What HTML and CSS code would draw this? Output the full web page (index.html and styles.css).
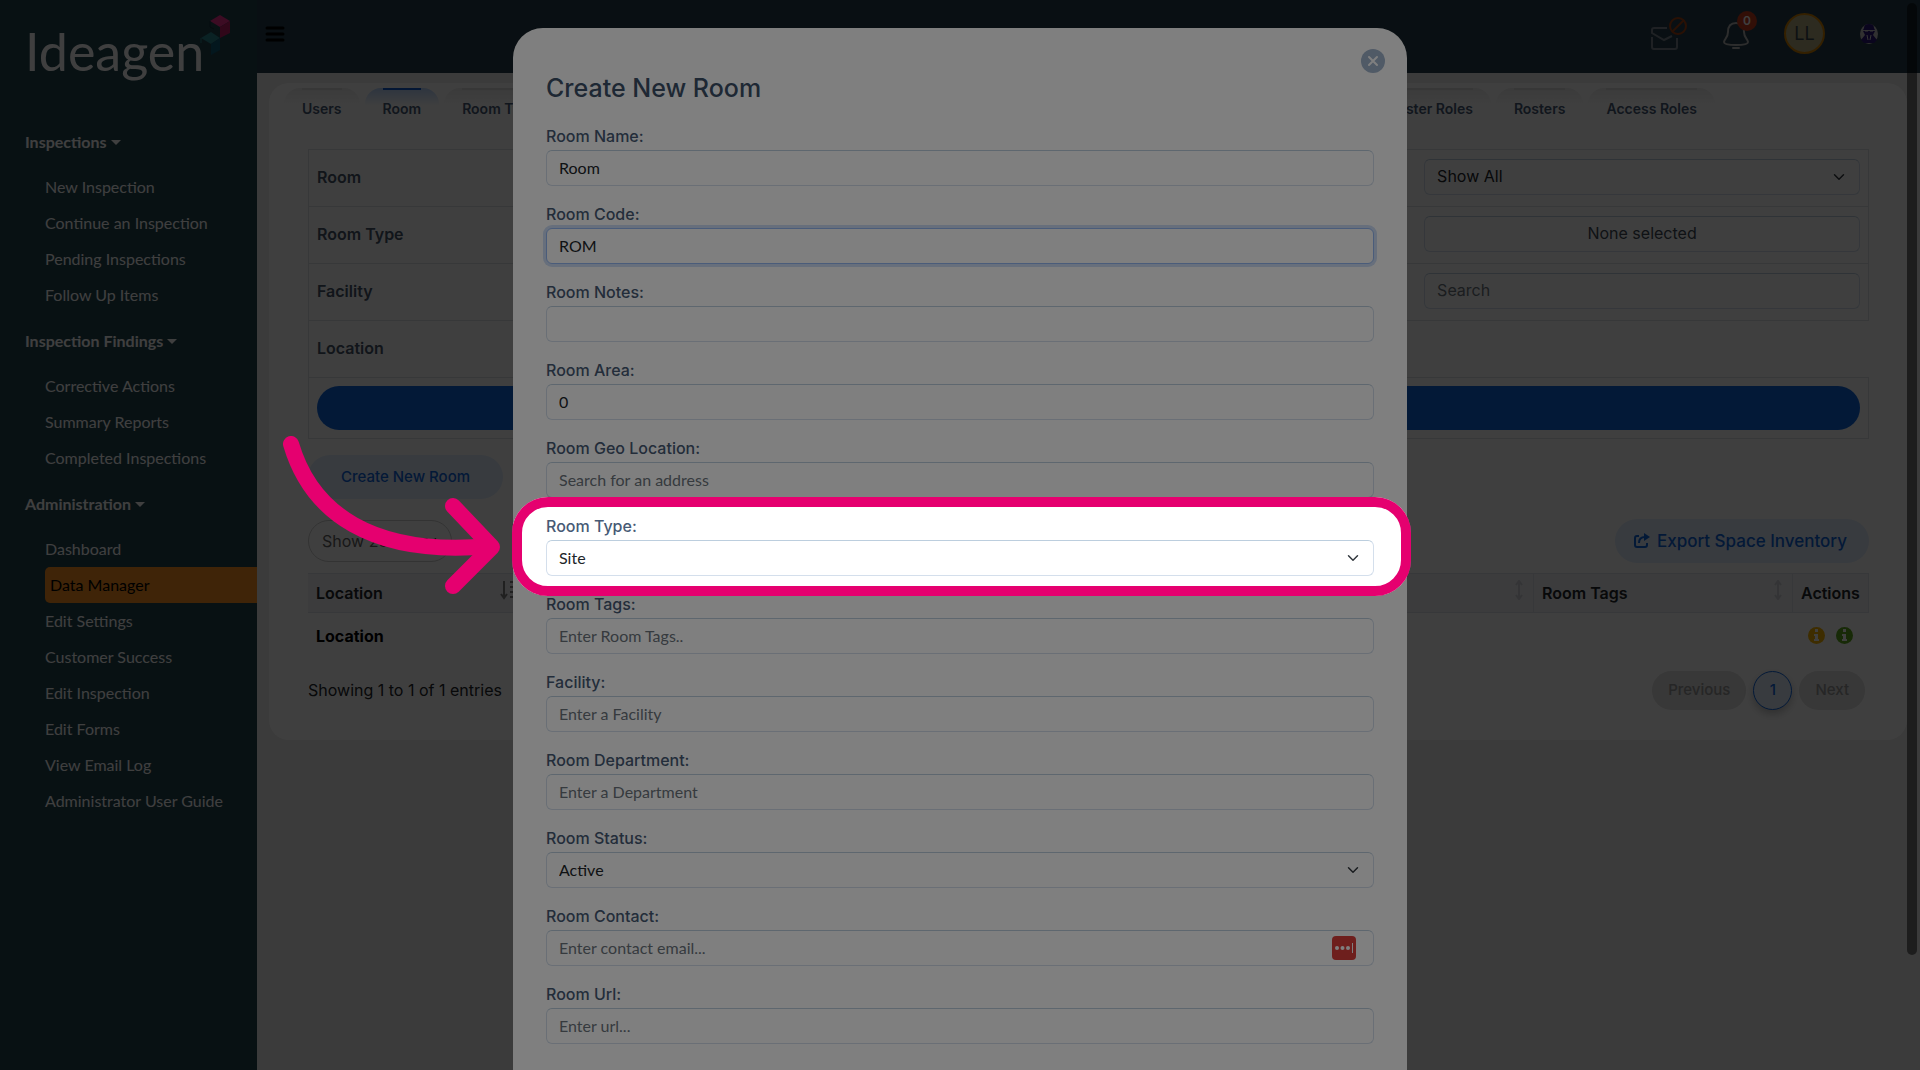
FILE: index.html
```
<!DOCTYPE html>
<html lang="en">

<head>
<meta charset="UTF-8">
<meta name="viewport" content="width=device-width, initial-scale=1">
<title>Ideagen | Data Manager</title>
<link rel="stylesheet" href="styles.css">
</head>

<body>

<div class="layout">

<nav class="sidebar">
<a href="#" class="logo" aria-label="Ideagen home">
<svg width="210" height="76" viewBox="0 0 210 76">
<text x="0" y="59" class="logo-text">Ideagen</text>
<path d="M195 3l10 6-10 6-10-6z" fill="#f0308f"/>
<path d="M195 15l10-6v12l-10 5z" fill="#c01c66"/>
<path d="M185 9v6l4 2" fill="none" stroke="#15303a"/>
<path d="M186 20l9 6-9 6-10-6z" fill="#2b8890"/>
<path d="M186 32l9-6v12l-9 5z" fill="#0c5c78"/>
<path d="M176 26v5" stroke="#2b8890"/>
</svg>
</a>

<h2 class="nav-heading">Inspections <span class="caret"></span></h2>
<ul class="nav-list">
<li><a href="#">New Inspection</a></li>
<li><a href="#">Continue an Inspection</a></li>
<li><a href="#">Pending Inspections</a></li>
<li><a href="#">Follow Up Items</a></li>
</ul>

<h2 class="nav-heading">Inspection Findings <span class="caret"></span></h2>
<ul class="nav-list">
<li><a href="#">Corrective Actions</a></li>
<li><a href="#">Summary Reports</a></li>
<li><a href="#">Completed Inspections</a></li>
</ul>

<h2 class="nav-heading">Administration <span class="caret"></span></h2>
<ul class="nav-list">
<li><a href="#">Dashboard</a></li>
<li><a href="#" class="active">Data Manager</a></li>
<li><a href="#">Edit Settings</a></li>
<li><a href="#">Customer Success</a></li>
<li><a href="#">Edit Inspection</a></li>
<li><a href="#">Edit Forms</a></li>
<li><a href="#">View Email Log</a></li>
<li><a href="#">Administrator User Guide</a></li>
</ul>
</nav><!-- sidebar -->

<div class="main">

<header class="topbar">
<button type="button" class="icon-button" aria-label="Toggle menu">
<svg width="20" height="18" viewBox="0 0 20 18" stroke="#000" stroke-width="3" stroke-linecap="round"><path d="M2 3h16M2 9h16M2 15h16"/></svg>
</button>
<div class="topbar-tools">
<button type="button" class="icon-button" aria-label="Messages">
<svg width="38" height="34" viewBox="0 0 38 34" fill="none">
<path d="M17 11H4a2 2 0 0 0-2 2v3l12 7 8-4M2 20v10a2 2 0 0 0 2 2h21a2 2 0 0 0 2-2V21" stroke="#7c8791" stroke-width="2"/>
<circle cx="28" cy="9" r="8" stroke="#a84312" stroke-width="2"/>
<path d="M22 15L34 3" stroke="#a84312" stroke-width="2"/>
</svg>
</button>
<button type="button" class="icon-button bell" aria-label="Notifications">
<svg width="26" height="29" viewBox="0 0 26 29" fill="none" stroke="#b4b4b4" stroke-width="2" stroke-linejoin="round">
<path d="M13 2c-6 0-8 4-8 9 0 6-4 7-4 10 0 2 5 3 12 3s12-1 12-3c0-3-4-4-4-10 0-5-2-9-8-9z"/><path d="M10 27h6" stroke-linecap="round"/>
</svg>
<span class="badge">0</span>
</button>
<button type="button" class="avatar">LL</button>
<button type="button" class="icon-button" aria-label="Assistant">
<svg width="18" height="20" viewBox="0 0 18 20">
<ellipse cx="9" cy="10" rx="9" ry="10" fill="#c4c4c4"/>
<path d="M4 4q0-4 5-4t5 4l1 2H3zM3 7h12l-2 4 4 5-3 3H4l-3-3 4-5z" fill="#2a1478"/>
<path d="M5 7h3M10 7h3M7 11l1 5M11 11l-1 5" stroke="#d8d8d8"/>
</svg>
</button>
</div>
</header><!-- topbar -->

<main class="card">

<ul class="tabs">
<li><a href="#">Users</a></li>
<li><a href="#" class="active">Room</a></li>
<li><a href="#">Room Types</a></li>
<li class="tabs-end"><a href="#">Roster Roles</a></li>
<li><a href="#">Rosters</a></li>
<li><a href="#">Access Roles</a></li>
</ul>

<div class="content">

<table class="filters">
<tr>
<th scope="row">Room</th>
<td><select class="control" aria-label="Room"><option>Show All</option></select></td>
</tr>
<tr>
<th scope="row">Room Type</th>
<td><button type="button" class="control picker">None selected</button></td>
</tr>
<tr>
<th scope="row">Facility</th>
<td><input type="text" class="control" placeholder="Search" aria-label="Facility"></td>
</tr>
<tr class="open-row">
<th scope="row">Location</th>
<td></td>
</tr>
<tr class="apply-row">
<td colspan="2"><button type="button" class="apply" aria-label="Search rooms"></button></td>
</tr>
</table>

<button type="button" class="pill create">Create New Room</button>

<div class="table-tools">
<select class="page-size" aria-label="Rows per page"><option>Show 25 rows</option></select>
<button type="button" class="pill export">
<svg width="16" height="16" viewBox="0 0 16 16" fill="none" stroke="#0f66df" stroke-width="2"><path d="M5 3H3a2 2 0 0 0-2 2v7a2 2 0 0 0 2 2h8a2 2 0 0 0 2-2v-2"/><path d="M5 10c0-4 2-6 6-6"/><path d="M10 0l6 4-6 4z" fill="#0f66df" stroke="none"/></svg>
Export Space Inventory
</button>
</div>

<table class="rooms">
<thead>
<tr>
<th class="col-location"><span class="th-label">Location
<svg width="22" height="20" viewBox="0 0 22 20" fill="none" stroke="#808080" stroke-width="2"><path d="M4 1v16M1 14l3 4 3-4M10 2h10M10 7h8M10 12h6M10 17h4"/></svg></span></th>
<th><span class="th-label"><span></span>
<svg width="8" height="20" viewBox="0 0 8 20" fill="none" stroke="#d0d2d8" stroke-width="2"><path d="M4 2v16M1 5l3-4 3 4M1 15l3 4 3-4"/></svg></span></th>
<th class="col-tags"><span class="th-label">Room Tags
<svg width="8" height="20" viewBox="0 0 8 20" fill="none" stroke="#d0d2d8" stroke-width="2"><path d="M4 2v16M1 5l3-4 3 4M1 15l3 4 3-4"/></svg></span></th>
<th class="col-actions">Actions</th>
</tr>
</thead>
<tbody>
<tr>
<td class="strong">Location</td>
<td></td>
<td></td>
<td>
<div class="actions">
<button type="button" class="icon-button" aria-label="Details"><svg width="17" height="17" viewBox="0 0 17 17"><circle cx="8.500" cy="8.500" r="8.500" fill="#f8b400"/><path d="M7 2h3v3H7zM6 7h4v5h1v2H6v-2h1V9H6z" fill="#fff"/></svg></button>
<button type="button" class="icon-button" aria-label="Info"><svg width="17" height="17" viewBox="0 0 17 17"><circle cx="8.500" cy="8.500" r="8.500" fill="#5ca81c"/><path d="M7 2h3v3H7zM6 7h4v5h1v2H6v-2h1V9H6z" fill="#fff"/></svg></button>
</div>
</td>
</tr>
</tbody>
</table>

<div class="table-footer">
<span>Showing 1 to 1 of 1 entries</span>
<div class="pagination">
<button type="button" class="page">Previous</button>
<button type="button" class="page current">1</button>
<button type="button" class="page">Next</button>
</div>
</div>

</div><!-- content -->
</main>

</div><!-- main -->
</div><!-- layout -->

<div class="scroll-thumb"></div>

<div class="modal">
<form class="dialog">
<button type="button" class="close" aria-label="Close">
<svg width="12" height="12" viewBox="0 0 12 12" stroke="#fff" stroke-width="2" stroke-linecap="round"><path d="M2 2l8 8M10 2l-8 8"/></svg>
</button>
<h1 class="dialog-title">Create New Room</h1>

<div class="field">
<label for="name">Room Name:</label>
<input type="text" id="name" class="control" value="Room">
</div>
<div class="field">
<label for="code">Room Code:</label>
<input type="text" id="code" class="control focused" value="ROM">
</div>
<div class="field">
<label for="notes">Room Notes:</label>
<input type="text" id="notes" class="control">
</div>
<div class="field">
<label for="area">Room Area:</label>
<input type="text" id="area" class="control" value="0">
</div>
<div class="field">
<label for="geo">Room Geo Location:</label>
<input type="text" id="geo" class="control" placeholder="Search for an address">
</div>
<div class="field spotlight">
<label for="type">Room Type:</label>
<select id="type" class="control"><option>Site</option></select>
<svg class="arrow" width="220" height="160" viewBox="0 0 220 160" fill="none" stroke="#e5006f" stroke-width="16" stroke-linecap="round" stroke-linejoin="round">
<path d="M8 8C28 76 88 121 207 110"/><path d="M170 70l39 41-39 39"/>
</svg>
</div>
<div class="field">
<label for="tags">Room Tags:</label>
<input type="text" id="tags" class="control" placeholder="Enter Room Tags..">
</div>
<div class="field">
<label for="facility">Facility:</label>
<input type="text" id="facility" class="control" placeholder="Enter a Facility">
</div>
<div class="field">
<label for="department">Room Department:</label>
<input type="text" id="department" class="control" placeholder="Enter a Department">
</div>
<div class="field">
<label for="status">Room Status:</label>
<select id="status" class="control"><option>Active</option></select>
</div>
<div class="field">
<label for="contact">Room Contact:</label>
<input type="email" id="contact" class="control" placeholder="Enter contact email...">
<svg class="autofill" width="24" height="24" viewBox="0 0 24 24">
<rect width="24" height="24" rx="4" fill="#dc3e3a"/>
<g fill="#fff"><circle cx="5" cy="12" r="2"/><circle cx="10.500" cy="12" r="2"/><circle cx="16" cy="12" r="2"/><path d="M20 7h1v10h-1z"/></g>
</svg>
</div>
<div class="field">
<label for="url">Room Url:</label>
<input type="text" id="url" class="control" placeholder="Enter url...">
</div>
</form>
</div><!-- modal -->

</body>

</html>
```

FILE: styles.css
```
* {
box-sizing: border-box;
}
body {
margin: 0;
overflow: hidden;
background: #ececec;
color: #212529;
font-family: Inter, "Liberation Sans", sans-serif;
font-size: 16px;
line-height: 24px;
}
button, input, select {
font: inherit;
color: inherit;
}
ul {
list-style: none;
margin: 0;
padding: 0;
}
a {
color: inherit;
text-decoration: none;
}
svg {
display: block;
flex: none;
}
.layout {
display: flex;
min-height: 100vh;
}
.icon-button {
position: relative;
padding: 0;
border: 0;
background: none;
}

/* Sidebar */
.sidebar {
flex: none;
width: 257px;
padding: 12px 0 0 25px;
background: #20444f;
color: #fff;
font-family: Lato, sans-serif;
}
.logo {
display: block;
margin-bottom: 42px;
}
.logo-text {
font-family: Lato, sans-serif;
font-size: 52px;
fill: #fff;
}
.nav-heading {
display: flex;
align-items: center;
gap: 4px;
margin: 0 0 15px;
font-size: 16px;
line-height: 24px;
}
.caret {
border: 5px solid transparent;
border-top-color: #fff;
border-bottom: 0;
}
.nav-list {
margin: 0 0 16px 20px;
}
.nav-list a {
display: block;
line-height: 36px;
}
.nav-list .active {
padding-left: 5px;
border-radius: 5px 0 0 5px;
background: #ff9020;
color: #000;
}

/* Top bar */
.main {
flex: 1;
min-width: 0;
}
.topbar {
display: flex;
justify-content: space-between;
align-items: center;
height: 73px;
padding: 0 42px 6px 8px;
background: #263e4c;
}
.topbar-tools {
display: flex;
align-items: center;
gap: 35px;
}
.bell {
margin-top: 4px;
}
.badge {
position: absolute;
top: -10px;
right: -8px;
width: 20px;
border-radius: 10px;
background: #c83c1c;
color: #fff;
font-size: 12px;
font-weight: 600;
line-height: 20px;
}
.avatar {
width: 41px;
height: 41px;
padding: 0;
border: 2px solid #d08000;
border-radius: 50%;
background: #b4ac80;
color: #34444c;
font-size: 18px;
}

/* Card and tabs */
.card {
margin: 10px 13px 0 12px;
padding: 5px 0 30px;
border-radius: 20px;
background: #fff;
}
.tabs {
display: flex;
gap: 5px;
padding: 0 192px 0 15px;
}
.tabs-end {
margin-left: auto;
}
.tabs a {
display: block;
padding: 0 18px;
border-radius: 16px 16px 0 0;
background: linear-gradient(#ececec, #fff 18px);
color: #475a75;
font-size: 14px;
font-weight: 600;
line-height: 38px;
}
.tabs a::before {
content: "";
display: block;
height: 2px;
background: #dcdcdc;
}
.tabs .active {
background: linear-gradient(#b8d4fc, #fff 18px);
}
.tabs .active::before {
background: #0f5bd0;
}
.content {
padding: 21px 38px 0 39px;
}

/* Shared form controls */
.control {
display: block;
width: 100%;
height: 36px;
padding: 0 12px 1px;
border: 1px solid #d4dfec;
border-top-color: #bccede;
border-radius: 6px;
background-color: #fff;
outline: none;
}
.control::placeholder {
color: #6c757d;
opacity: 1;
}
select {
appearance: none;
background-image: url("data:image/svg+xml,%3Csvg xmlns='http://www.w3.org/2000/svg' viewBox='0 0 16 16'%3E%3Cpath fill='none' stroke='%23343a40' stroke-linecap='round' stroke-linejoin='round' stroke-width='2' d='m2 5 6 6 6-6'/%3E%3C/svg%3E");
background-repeat: no-repeat;
background-position: right 12px center;
background-size: 16px 12px;
}

/* Filters */
.filters {
width: 100%;
border: 1px solid #dee2e6;
border-right: 0;
border-collapse: collapse;
}
.filters tr {
height: 57px;
border-bottom: 1px solid #dee2e6;
}
.filters th {
padding: 0 8px 3px;
color: #475569;
font-weight: 600;
text-align: left;
}
.filters td {
width: 29%;
padding: 7px 8px 10px;
border-right: 1px solid #dee2e6;
}
.filters .open-row td {
border-right: 0;
}
.filters .apply-row td {
padding: 8px;
}
.picker {
text-align: center;
color: #404a54;
}
.apply {
display: block;
width: 100%;
height: 44px;
border: 0;
border-radius: 22px;
background: #0f66df;
}
.pill {
display: flex;
align-items: center;
gap: 7px;
height: 44px;
border: 0;
border-radius: 22px;
background: #e1edfd;
color: #0f66df;
}
.create {
margin: 16px 0 20px;
padding: 0 33px;
font-size: 15px;
font-weight: 500;
}
.table-tools {
display: flex;
justify-content: space-between;
align-items: center;
margin-bottom: 10px;
}
.page-size {
width: 144px;
height: 42px;
padding: 0 13px;
border: 1px solid #ccc;
border-radius: 21px;
background-color: #fff;
color: #606060;
}
.export {
padding: 0 22px 0 19px;
font-size: 17px;
font-weight: 500;
}

/* Rooms table */
.rooms {
width: 100%;
border-collapse: collapse;
table-layout: fixed;
}
.rooms th {
height: 39px;
padding: 0 8px;
border-right: 1px solid #dfe1ea;
border-top: 1px solid #dfe1ea;
border-bottom: 1px solid #dfe1ea;
background: #f0f1f6;
font-weight: 600;
text-align: left;
}
.rooms td {
height: 46px;
padding: 0 8px;
}
.rooms .strong {
color: #000;
font-weight: 700;
}
.th-label {
display: flex;
justify-content: space-between;
align-items: center;
}
.th-label svg {
margin: -6px 2px 0 0;
}
.col-location {
width: 224px;
}
.col-tags {
width: 259px;
}
.col-actions {
width: 76px;
}
.actions {
display: flex;
justify-content: center;
gap: 11px;
}
.table-footer {
display: flex;
justify-content: space-between;
align-items: center;
margin-top: 12px;
}
.pagination {
display: flex;
gap: 7px;
padding-right: 4px;
}
.page {
height: 39px;
min-width: 39px;
padding: 0 16px;
border: 0;
border-radius: 20px;
background: #e0e0e0;
color: #989898;
font-size: 15px;
font-weight: 500;
}
.page.current {
padding: 0;
border: 1px solid #0f66df;
background: #e1edfd;
color: #0f66df;
box-shadow: 0 4px 8px rgba(0, 0, 0, .25);
}
.scroll-thumb {
position: fixed;
top: 3px;
right: 3px;
width: 10px;
height: 89%;
border-radius: 5px;
background: rgba(0, 0, 0, .5);
}

/* Modal */
.modal {
position: fixed;
inset: 0;
overflow: hidden;
background: rgba(0, 0, 0, .5);
}
.dialog {
position: relative;
width: 100%;
max-width: 894px;
margin: 28px auto;
padding: 45px 33px 80px;
border-radius: 30px;
background: #fff;
}
.dialog-title {
margin: 0 0 21px;
color: #3d5068;
font-size: 25px;
font-weight: 500;
line-height: 30px;
}
.close {
position: absolute;
top: 21px;
right: 22px;
display: flex;
justify-content: center;
align-items: center;
width: 24px;
height: 24px;
padding: 0;
border: 0;
border-radius: 50%;
background: #a0b4cc;
}
.field {
position: relative;
margin-bottom: 16px;
}
.field label {
display: block;
margin-bottom: 2px;
color: #475a75;
font-weight: 500;
}
.field .control {
font-family: Lato, sans-serif;
}
.focused {
border-color: #94b8f4;
box-shadow: 0 0 0 3px #cfdff8;
}
.autofill {
position: absolute;
right: 18px;
bottom: 6px;
}

/* Highlighted field: everything outside the ring is dimmed */
.spotlight {
z-index: 1;
}
.spotlight::after {
content: "";
position: absolute;
inset: -17px -37px -20px -34px;
border: 10px solid #e5006f;
border-radius: 36px;
box-shadow: 0 0 0 3000px rgba(0, 0, 0, .5);
pointer-events: none;
}
.arrow {
position: absolute;
z-index: 1;
top: -78px;
left: -263px;
}
```
